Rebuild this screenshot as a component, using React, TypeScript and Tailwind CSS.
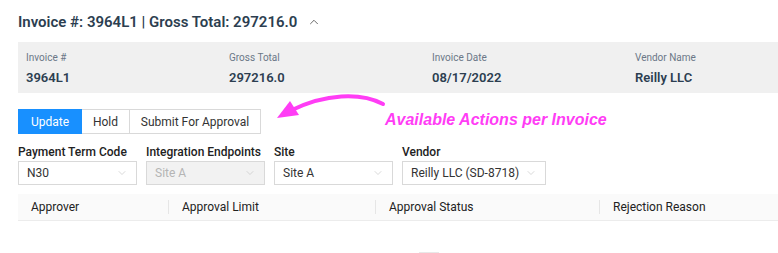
import { ChevronUp, ChevronDown } from "lucide-react"

const summary = [
    { label: "Invoice #", value: "3964L1" },
    { label: "Gross Total", value: "297216.0" },
    { label: "Invoice Date", value: "08/17/2022" },
    { label: "Vendor Name", value: "Reilly LLC" },
]

const selects = [
    { label: "Payment Term Code", value: "N30", width: "w-[119px]", disabled: false },
    { label: "Integration Endpoints", value: "Site A", width: "w-[119px]", disabled: true },
    { label: "Site", value: "Site A", width: "w-[119px]", disabled: false },
    { label: "Vendor", value: "Reilly LLC (SD-8718)", width: "w-[144px]", disabled: false },
]

const columns = [
    { name: "Approver", width: "w-[151px]" },
    { name: "Approval Limit", width: "w-[207px]" },
    { name: "Approval Status", width: "w-[224px]" },
    { name: "Rejection Reason", width: "flex-1" },
]

export default function App() {
    return (
        <div className="w-[778px] h-[253px] bg-white overflow-hidden pl-[18px] font-['Roboto',sans-serif] text-[#2c3e50] relative">
            <div className="flex items-center gap-[10px] pt-[11px] h-[42px] pb-[9px]">
                <h1 className="text-[15px] font-semibold">Invoice #: 3964L1 | Gross Total: 297216.0</h1>
                <ChevronUp size={14} strokeWidth={1.5} className="text-[#555]" />
            </div>

            <div className="bg-[#f0f0f0] h-[51px] flex pl-[8px] pt-[9px]">
                {summary.map(item =>
                    <div key={item.label} className="w-[203px] shrink-0">
                        <p className="text-[10px] text-[#6b7787] leading-[14px]">{item.label}</p>
                        <p className="text-[13px] font-semibold mt-[5px] leading-[16px]">{item.value}</p>
                    </div>
                )}
            </div>

            <div className="flex mt-[16px] h-[25px] text-[12px]">
                <button className="w-[64px] bg-[#1890ff] text-white border border-[#1890ff]">Update</button>
                <button className="w-[48px] border-y border-r border-[#d9d9d9] text-[#333]">Hold</button>
                <button className="w-[131px] border-y border-r border-[#d9d9d9] text-[#333]">Submit For Approval</button>
            </div>

            <div className="flex gap-[9px] mt-[10px]">
                {selects.map(s =>
                    <div key={s.label} className={`${s.width} shrink-0`}>
                        <p className="text-[12px] font-medium text-[#222] leading-[16px] whitespace-nowrap">{s.label}</p>
                        <div className={`h-[24px] mt-[1px] border border-[#d9d9d9] flex items-center justify-between pl-[8px] pr-[8px] text-[12px] ${s.disabled ? "bg-[#f2f2f2] text-[#b5b5b5]" : "bg-white text-[#333]"}`}>
                            <span className="whitespace-nowrap">{s.value}</span>
                            <ChevronDown size={12} strokeWidth={1.2} className="text-[#bfbfbf] shrink-0" />
                        </div>
                    </div>
                )}
            </div>

            <div className="flex mt-[9px] h-[27px] bg-[#fafafa] border-b border-[#ececec] text-[12px] text-[#222]">
                {columns.map((c, i) =>
                    <div key={c.name} className={`${c.width} flex items-center relative pl-[13px]`}>
                        {c.name}
                        {i < columns.length - 1 &&
                            <span className="absolute right-0 top-[6px] h-[14px] w-px bg-[#e6e6e6]" />
                        }
                    </div>
                )}
            </div>

            <div className="ml-[401px] mt-[31px] w-[20px] h-[1px] bg-[#e8e8e8]" />

            {/* annotation */}
            <svg className="absolute left-[270px] top-[90px]" width="120" height="40" viewBox="0 0 120 40">
                <path d="M113 14 C 90 2, 55 4, 22 20" stroke="#ff3df5" strokeWidth="4" fill="none" strokeLinecap="round" />
                <polygon points="7,28 20,11 29,25" fill="#ff3df5" />
            </svg>
            <p className="absolute left-[385px] top-[108px] text-[16px] font-bold italic text-[#ff3df5] font-['Liberation_Sans',sans-serif]">
                Available Actions per Invoice
            </p>
        </div>
    )
}
